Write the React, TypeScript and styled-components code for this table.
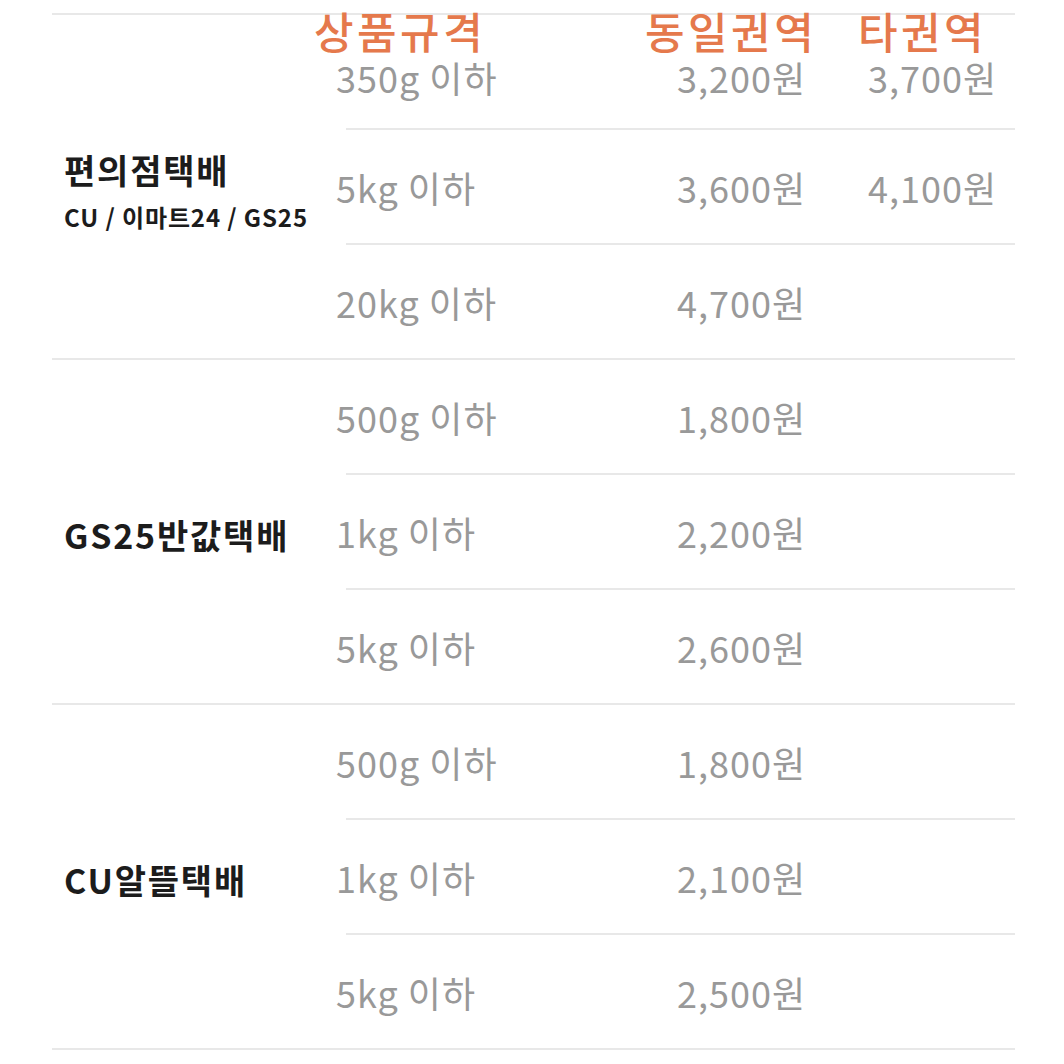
import { FC } from 'react'
import styled, { createGlobalStyle } from 'styled-components'

const GlobalStyle = createGlobalStyle`
  html, body {
    margin: 0;
    padding: 0;
    background: #ffffff;
  }
  body {
    font-family: 'Noto Sans CJK KR', 'Noto Sans', sans-serif;
  }
`

const Page = styled.div`
  width: 1064px;
  height: 1064px;
  overflow: hidden;
  padding-top: 13px;
  box-sizing: border-box;
`

const Table = styled.div`
  position: relative;
  margin-left: 52px;
  width: 963px;
  border-top: 2px solid #e8e8e8;
`

// headings sit over the first row, like in the source image
const HeaderLabel = styled.span<{ $left: number }>`
  position: absolute;
  top: -7px;
  left: ${p => p.$left}px;
  font-size: 43px;
  font-weight: 500;
  line-height: 44px;
  color: #e5794c;
  letter-spacing: 3.5px;
  white-space: nowrap;
`

const Group = styled.div`
  display: flex;
  border-bottom: 2px solid #e8e8e8;
`

const Carrier = styled.div`
  width: 284px;
  box-sizing: border-box;
  display: flex;
  flex-direction: column;
  justify-content: center;
  padding-left: 12px;
  padding-top: 6px;
`

const CarrierName = styled.div`
  font-size: 34px;
  font-weight: 700;
  color: #1c1c1c;
  line-height: 42px;
  letter-spacing: 1.8px;
  white-space: nowrap;
`

const CarrierSub = styled.div`
  margin-top: 12px;
  font-size: 24px;
  font-weight: 700;
  color: #1c1c1c;
  line-height: 28px;
  letter-spacing: 0.9px;
  white-space: nowrap;
`

const Rows = styled.div`
  flex: 1;
  display: flex;
  flex-direction: column;
`

const PriceRow = styled.div<{ $shift?: number }>`
  height: 113px;
  box-sizing: border-box;
  padding-top: ${p => p.$shift ?? 0}px;
  display: grid;
  grid-template-columns: 341px 191px 1fr;
  align-items: center;
  font-size: 36px;
  line-height: 44px;
  font-weight: 400;
  color: #999999;
  letter-spacing: 1px;
  white-space: nowrap;
`

const Divider = styled.div`
  height: 2px;
  margin-left: 10px;
  background: #e8e8e8;
`

type Price = { spec: string; same: string; other?: string }

type CarrierData = { name: string; sub?: string; rows: Price[] }

const carriers: CarrierData[] = [
  {
    name: '편의점택배',
    sub: 'CU / 이마트24 / GS25',
    rows: [
      { spec: '350g 이하', same: '3,200원', other: '3,700원' },
      { spec: '5kg 이하', same: '3,600원', other: '4,100원' },
      { spec: '20kg 이하', same: '4,700원' },
    ],
  },
  {
    name: 'GS25반값택배',
    rows: [
      { spec: '500g 이하', same: '1,800원' },
      { spec: '1kg 이하', same: '2,200원' },
      { spec: '5kg 이하', same: '2,600원' },
    ],
  },
  {
    name: 'CU알뜰택배',
    rows: [
      { spec: '500g 이하', same: '1,800원' },
      { spec: '1kg 이하', same: '2,100원' },
      { spec: '5kg 이하', same: '2,500원' },
    ],
  },
]

const App: FC = () => (
  <>
    <GlobalStyle />
    <Page>
      <Table>
        <HeaderLabel $left={262}>상품규격</HeaderLabel>
        <HeaderLabel $left={593}>동일권역</HeaderLabel>
        <HeaderLabel $left={806}>타권역</HeaderLabel>
        {carriers.map((c, gi) => (
          <Group key={c.name}>
            <Carrier>
              <CarrierName>{c.name}</CarrierName>
              {c.sub && <CarrierSub>{c.sub}</CarrierSub>}
            </Carrier>
            <Rows>
              {c.rows.map((r, i) => (
                <div key={r.spec}>
                  {i > 0 && <Divider />}
                  <PriceRow $shift={gi === 0 && i === 0 ? 10 : 0}>
                    <span>{r.spec}</span>
                    <span>{r.same}</span>
                    <span>{r.other}</span>
                  </PriceRow>
                </div>
              ))}
            </Rows>
          </Group>
        ))}
      </Table>
    </Page>
  </>
)

export default App
